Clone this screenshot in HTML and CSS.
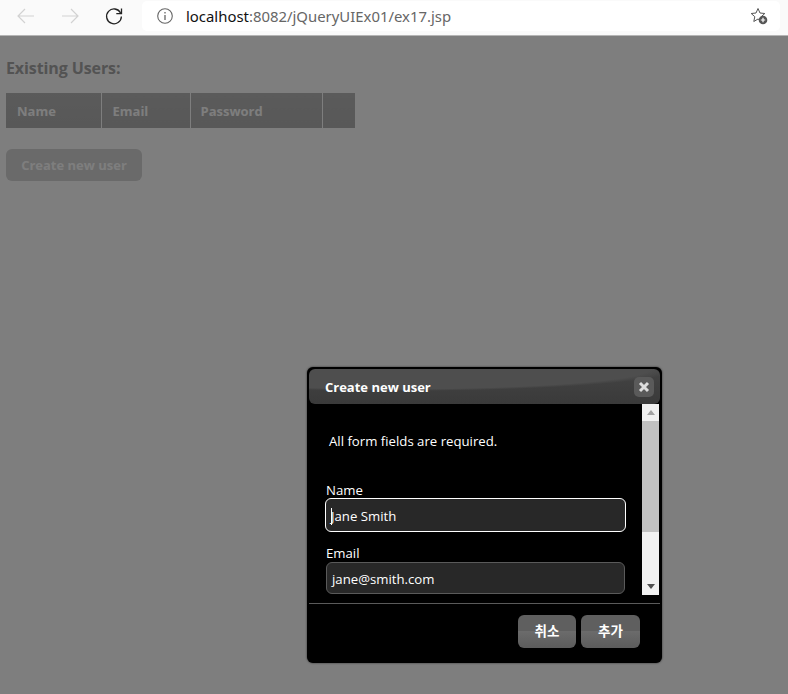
FILE: index.html
```html
<!DOCTYPE html>
<html lang="en">
<head>
    <meta charset="UTF-8">
    <title>ex17.jsp</title>
    <link rel="stylesheet" href="styles.css">
</head>
<body>
    <div class="toolbar">
        <svg class="nav-icon back" width="20" height="20" viewBox="0 0 20 20"><path d="M18 10H2M9 3l-7 7 7 7" fill="none" stroke="#d2d2d2" stroke-width="1.2"/></svg>
        <svg class="nav-icon forward" width="20" height="20" viewBox="0 0 20 20"><path d="M2 10h16M11 3l7 7-7 7" fill="none" stroke="#d2d2d2" stroke-width="1.2"/></svg>
        <svg class="nav-icon reload" width="20" height="20" viewBox="0 0 20 20"><path d="M16.6 7A7.4 7.4 0 1 0 17.4 10.5" fill="none" stroke="#222" stroke-width="1.3"/><path d="M17.5 2.5v5.200h-5.200" fill="none" stroke="#222" stroke-width="1.3"/></svg>
        <div class="address">
            <svg class="info-icon" width="16" height="16" viewBox="0 0 16 16"><circle cx="8" cy="8" r="7.300" fill="none" stroke="#666" stroke-width="1.100"/><path d="M8 7v5M8 4v1.500" stroke="#666" stroke-width="1.300"/></svg>
            <span class="host">localhost</span><span class="path">:8082/jQueryUIEx01/ex17.jsp</span>
            <svg class="star-icon" width="18" height="18" viewBox="0 0 18 18"><path d="M8 1.500l2 4.500 4.800.5-3.600 3.200 1 4.800L8 12l-4.200 2.500 1-4.800L1.200 6.500 6 6z" fill="none" stroke="#555" stroke-width="1"/><circle cx="13" cy="13" r="4.300" fill="#555"/><path d="M10.800 13h4.400M13 10.800v4.400" stroke="#fff" stroke-width="1.200"/></svg>
        </div>
    </div>

    <div class="page">
        <h1>Existing Users:</h1>
        <table class="users">
            <thead>
                <tr>
                    <th class="col-name">Name</th>
                    <th class="col-email">Email</th>
                    <th class="col-password">Password</th>
                    <th class="col-extra"></th>
                </tr>
            </thead>
        </table>
        <button class="create-user">Create new user</button>
    </div>

    <div class="overlay"></div>

    <div class="dialog">
        <div class="dialog-title">
            <span>Create new user</span>
            <div class="close-btn">
                <svg width="12" height="12" viewBox="0 0 12 12"><path d="M2 2l8 8M10 2l-8 8" stroke="#ddd" stroke-width="3"/></svg>
            </div>
        </div>
        <div class="dialog-body">
            <div class="dialog-content">
                <p class="tips">All form fields are required.</p>
                <label>Name</label>
                <div class="field focused"><i class="caret"></i>Jane Smith</div>
                <label>Email</label>
                <div class="field">jane@smith.com</div>
            </div>
            <div class="scrollbar">
                <div class="arrow-up"></div>
                <div class="thumb"></div>
                <div class="arrow-down"></div>
            </div>
        </div>
        <div class="dialog-footer">
            <button class="dialog-btn cancel">취소</button>
            <button class="dialog-btn">추가</button>
        </div>
    </div>
</body>
</html>
```

FILE: styles.css
```css
body {
    margin: 0;
    height: 694px;
    overflow: hidden;
    font-family: 'Open Sans', 'Noto Sans CJK KR', sans-serif;
    background-color: #fff;
}
.toolbar {
    box-sizing: border-box;
    height: 36px;
    padding-bottom: 3px;
    border-bottom: 1px solid #b5b5b5;
    background-color: #fafafa;
    display: flex;
    align-items: center;
    position: relative;
    z-index: 3;
}
.nav-icon {
    flex: none;
}
.back {
    margin-left: 16px;
}
.forward {
    margin-left: 24px;
}
.reload {
    margin-left: 24px;
}
.address {
    margin-left: 18px;
    width: 638px;
    height: 30px;
    background-color: #fff;
    border-radius: 5px;
    display: flex;
    align-items: center;
    font-family: 'Noto Sans', sans-serif;
    font-size: 14.9px;
}
.info-icon {
    margin-left: 15px;
    margin-right: 13px;
}
.host {
    color: #111;
}
.path {
    color: #666;
}
.star-icon {
    margin-left: auto;
    margin-right: 12px;
}
.page {
    padding: 21px 6px;
}
h1 {
    margin: 0 0 14px;
    font-size: 16px;
    line-height: 22px;
    font-weight: bold;
    color: #a8a8a8;
    letter-spacing: -0.1px;
}
.users {
    border-collapse: collapse;
    margin-bottom: 21px;
}
.users th {
    height: 35px;
    padding: 0 0 0 10px;
    box-sizing: border-box;
    text-align: left;
    font-size: 13px;
    color: #fff;
    background: linear-gradient(#b8b8b8, #b2b2b2);
    border-left: 1px solid #fff;
}
.users th:first-child {
    border-left: none;
    padding-left: 11px;
}
.users .col-email {
    padding-left: 11px;
}
.col-name { width: 95px; }
.col-email { width: 89px; }
.col-password { width: 132px; }
.col-extra { width: 33px; }
.create-user {
    width: 136px;
    height: 32px;
    padding: 0;
    border: none;
    border-radius: 6px;
    background-color: #d6d6d6;
    color: #fff;
    font-family: inherit;
    font-size: 13px;
    font-weight: bold;
}
.overlay {
    position: absolute;
    left: 0;
    right: 0;
    top: 36px;
    bottom: 0;
    background-color: rgba(0, 0, 0, 0.505);
}
.dialog {
    position: absolute;
    left: 307px;
    top: 367px;
    width: 351px;
    height: 292px;
    padding: 2px;
    border-radius: 6px;
    background-color: #000;
    box-shadow: 0 0 2px #222;
    color: #fff;
    font-size: 14px;
}
.dialog-title {
    box-sizing: border-box;
    height: 35px;
    padding: 0 6px 0 16px;
    border-radius: 6px;
    background:
        radial-gradient(120% 95% at 25% 0, #4e4e4e 60%, rgba(78, 78, 78, 0) 66%),
        linear-gradient(#444, #3a3a3a);
    display: flex;
    align-items: center;
    justify-content: space-between;
    font-size: 13px;
    font-weight: bold;
}
.close-btn {
    width: 20px;
    height: 20px;
    border-radius: 5px;
    background-color: #5a5a5a;
    display: flex;
    align-items: center;
    justify-content: center;
}
.dialog-body {
    height: 191px;
    display: flex;
}
.dialog-content {
    flex: 1;
    padding: 0 0 0 16px;
    overflow: hidden;
}
.tips {
    margin: 27px 4px 30px;
    font-size: 13.2px;
    line-height: 20px;
}
label {
    display: block;
    margin-left: 1px;
    font-size: 13.2px;
    line-height: 18px;
}
.field {
    box-sizing: border-box;
    width: 299px;
    height: 32px;
    margin: 0 0 12px 1px;
    padding: 2px 5px 0;
    border: 1px solid #5a5a5a;
    border-radius: 6px;
    background-color: #282828;
    display: flex;
    align-items: center;
    font-size: 13.2px;
}
.field.focused {
    width: 301px;
    height: 34px;
    margin-top: -1px;
    margin-left: 0;
    border-color: #fff;
}
.caret {
    width: 1px;
    height: 17px;
    background-color: #fff;
    margin-right: -1px;
}
.scrollbar {
    width: 17px;
    margin-right: 1px;
    background-color: #f1f1f1;
    display: flex;
    flex-direction: column;
    align-items: center;
}
.arrow-up {
    margin: 6px 0 6px;
    border: 4px solid transparent;
    border-top: none;
    border-bottom: 5px solid #a3a3a3;
}
.thumb {
    width: 100%;
    height: 111px;
    background-color: #c1c1c1;
}
.arrow-down {
    margin-top: auto;
    margin-bottom: 6px;
    border: 4px solid transparent;
    border-bottom: none;
    border-top: 5px solid #505050;
}
.dialog-footer {
    margin-top: 8px;
    border-top: 1px solid #5a5a5a;
    padding: 11px 20px 0 0;
    display: flex;
    justify-content: flex-end;
    gap: 5px;
}
.dialog-btn {
    width: 59px;
    height: 33px;
    padding: 0 0 3px;
    border: none;
    border-radius: 6px;
    background: linear-gradient(#5f5f5f 50%, #6b6b6b 50%, #5c5c5c);
    color: #fff;
    font-family: 'Noto Sans CJK KR', sans-serif;
    font-size: 13.5px;
    font-weight: bold;
}
.dialog-btn.cancel {
    width: 58px;
}
```
